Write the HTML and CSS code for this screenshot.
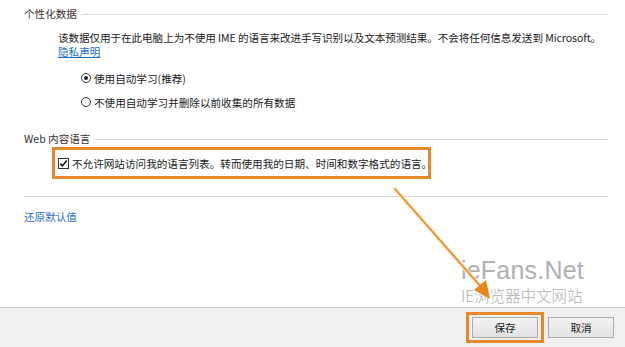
FILE: index.html
```html
<!DOCTYPE html>
<html lang="zh-CN">
<head>
<meta charset="utf-8">
<link rel="stylesheet" href="styles.css">
</head>
<body>
<div class="page">
  <div class="main">
    <div class="group-head first"><span class="group-title">个性化数据</span><span class="group-line"></span></div>
    <div class="indent">
      <p class="desc">该数据仅用于在此电脑上为不使用 IME 的语言来改进手写识别以及文本预测结果。不会将任何信息发送到 Microsoft。</p>
      <a class="link privacy" href="#">隐私声明</a>
      <div class="options">
        <label class="radio-row first-radio"><span class="radio checked"></span><span>使用自动学习(推荐)</span></label>
        <label class="radio-row second-radio"><span class="radio"></span><span>不使用自动学习并删除以前收集的所有数据</span></label>
      </div>
    </div>
    <div class="group-head second"><span class="group-title">Web 内容语言</span><span class="group-line"></span></div>
    <div class="highlight-wrap">
      <div class="highlight">
        <span class="checkbox">
          <svg width="11" height="11" viewBox="0 0 11 11"><rect x="0.5" y="0.5" width="10" height="10" fill="#fff" stroke="#333"/><path d="M2.3 5.6 L4.4 7.9 L8.8 2.6" fill="none" stroke="#111" stroke-width="1.6"/></svg>
        </span>
        <span class="check-text">不允许网站访问我的语言列表。转而使用我的日期、时间和数字格式的语言。</span>
      </div>
    </div>
    <div class="separator"></div>
    <a class="link restore" href="#">还原默认值</a>
  </div>
  <div class="footer">
    <div class="save-mark"><button class="btn">保存</button></div>
    <button class="btn">取消</button>
  </div>

  <div class="watermark">
    <div class="wm-big">ieFans.Net</div>
    <div class="wm-small">IE浏览器中文网站</div>
  </div>
  <svg class="arrow" width="625" height="347" viewBox="0 0 625 347">
    <line x1="395" y1="189" x2="482" y2="288" stroke="#fde6c8" stroke-width="4" stroke-linecap="round"/>
    <line x1="395" y1="189" x2="482" y2="288" stroke="#e58a1f" stroke-width="1.6" stroke-linecap="round"/>
    <polygon points="490,299 474,290 486,280" fill="#e58a1f"/>
  </svg>
</div>
</body>
</html>
```

FILE: styles.css
```css
* { box-sizing: border-box; }

html, body {
  margin: 0;
  padding: 0;
  background: #fff;
}

body {
  font-family: "Noto Sans CJK SC", "Microsoft YaHei", sans-serif;
  font-size: 10.6px;
  color: #1a1a1a;
}

.page {
  position: relative;
  width: 625px;
  height: 347px;
  display: flex;
  flex-direction: column;
  overflow: hidden;
}

.main {
  height: 307px;
  padding: 0 17px 0 24px;
  display: flex;
  flex-direction: column;
  align-items: flex-start;
}

.group-head {
  display: flex;
  align-items: center;
  width: 100%;
  height: 16px;
  line-height: 16px;
  color: #333;
}

.group-head.first { margin-top: 6px; }
.group-head.second { margin-top: 21px; }

.group-title {
  white-space: nowrap;
  padding-right: 5px;
}

.group-line {
  flex: 1;
  height: 1px;
  background: #d9d9d9;
}

.indent {
  margin-left: 34px;
  display: flex;
  flex-direction: column;
  align-items: flex-start;
}

.desc {
  margin: 9px 0 0 0;
  line-height: 14px;
  white-space: nowrap;
  letter-spacing: -0.08px;
}

.link {
  color: #1f6fc5;
  text-decoration: none;
  line-height: 14px;
}

.privacy {
  text-decoration: underline;
}

.options {
  margin-left: 24px;
  display: flex;
  flex-direction: column;
}

.radio-row {
  display: flex;
  align-items: center;
  height: 16px;
  gap: 3px;
}

.first-radio { margin-top: 11px; }
.second-radio { margin-top: 8px; }

.radio {
  width: 10px;
  height: 10px;
  border: 1px solid #333;
  border-radius: 50%;
  background: #fff;
  display: flex;
  align-items: center;
  justify-content: center;
  margin-left: -1px;
}

.radio.checked::after {
  content: "";
  width: 4px;
  height: 4px;
  border-radius: 50%;
  background: #222;
}

.highlight-wrap {
  margin-left: 28px;
}

.highlight {
  display: flex;
  align-items: center;
  height: 32px;
  border: 3px solid #e6892a;
  padding: 0 3px;
  gap: 3px;
  width: 379px;
}

.checkbox {
  display: flex;
  width: 11px;
  height: 11px;
}

.check-text {
  white-space: nowrap;
}

.separator {
  width: 100%;
  height: 1px;
  background: #d9d9d9;
  margin-top: 17px;
}

.restore {
  margin-top: 12px;
  line-height: 16px;
}

.footer {
  flex: 1;
  background: #f0f0f0;
  border-top: 1px solid #cccccc;
  display: flex;
  justify-content: flex-end;
  align-items: flex-start;
  padding: 4px 11px 0 0;
  gap: 4px;
}

.save-mark {
  border: 3px solid #e6892a;
  padding: 2px 3px;
}

.btn {
  width: 66px;
  height: 21px;
  margin: 0;
  padding: 0;
  font-family: inherit;
  font-size: 10.6px;
  color: #1a1a1a;
  background: linear-gradient(#f2f2f2, #e3e3e3);
  border: 1px solid #acacac;
}

.footer > .btn {
  margin-top: 5px;
}

.watermark {
  position: absolute;
  left: 461px;
  top: 258px;
  color: #a9a9a9;
  opacity: 0.9;
}

.wm-big {
  font-family: "Liberation Sans", Arial, sans-serif;
  font-size: 25px;
  line-height: 24px;
  letter-spacing: 0.2px;
}

.wm-small {
  font-family: "Noto Sans CJK SC", sans-serif;
  font-weight: 300;
  font-size: 15.5px;
  line-height: 18px;
  margin-top: 4px;
}

.arrow {
  position: absolute;
  left: 0;
  top: 0;
  pointer-events: none;
}
```
